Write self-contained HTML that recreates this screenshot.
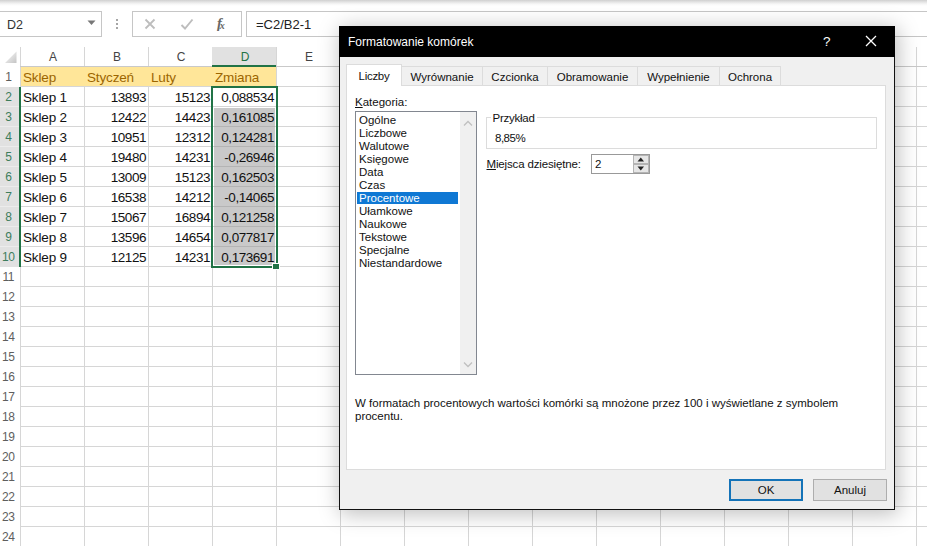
<!DOCTYPE html>
<html lang="pl"><head><meta charset="utf-8"><title>Formatowanie komórek</title>
<style>
html,body{margin:0;padding:0}
body{width:927px;height:546px;overflow:hidden;position:relative;background:#fff;font-family:"Liberation Sans",sans-serif;color:#222}
.abs{position:absolute}
#topbar{left:0;top:0;width:927px;height:6px;background:linear-gradient(#cfcfcf 0,#e4e4e4 2px,#f6f6f6 4px,#fff 6px)}
.box{border:1px solid #c6c6c6;background:#fff;box-sizing:border-box}
.t{position:absolute;white-space:nowrap;line-height:1}
.grid-v{position:absolute;width:1px;background:#d6d6d6}
.grid-h{position:absolute;height:1px;background:#d6d6d6}
.rh{position:absolute;left:0;width:16.5px;text-align:center;font-size:12px;letter-spacing:-0.5px;color:#5e5e5e;line-height:21px;height:20px}
.rh.sel{background:#e1e1e1;color:#3d7d5c}
.ch{position:absolute;top:47px;height:20px;width:64px;text-align:center;font-size:12px;color:#444;line-height:21px}
.cell{position:absolute;height:20px;line-height:21px;font-size:13.5px;color:#111;white-space:nowrap;box-sizing:border-box;letter-spacing:-0.15px}
.hd{color:#9c6a00;background:#ffe699}
.num{text-align:right;padding-right:2px;letter-spacing:-0.45px}
.dlgt{font-size:11.5px;color:#111}
</style></head><body>
<div id="topbar" class="abs"></div>

<div class="abs box" style="left:-1px;top:11px;width:103px;height:26px"></div>
<div class="t" style="left:7px;top:18.5px;font-size:12.5px;color:#333">D2</div>
<svg class="abs" style="left:87px;top:20px" width="9" height="6"><path d="M0.5 0.5H8.5L4.5 5Z" fill="#777"/></svg>
<div class="abs" style="left:116px;top:19px;width:2px;height:2px;background:#a6a6a6;box-shadow:0 4px 0 #a6a6a6,0 8px 0 #a6a6a6"></div>
<div class="abs box" style="left:132px;top:11px;width:110px;height:26px"></div>
<svg class="abs" style="left:144px;top:18px" width="12" height="12"><path d="M1.5 1.5L10.5 10.5M10.5 1.5L1.5 10.5" stroke="#bdbdbd" stroke-width="1.8" fill="none"/></svg>
<svg class="abs" style="left:180px;top:18px" width="14" height="12"><path d="M1.5 7L5 10.5L12.5 1.5" stroke="#bdbdbd" stroke-width="1.9" fill="none"/></svg>
<div class="t" style="left:217px;top:15.5px;font-size:14.5px;font-style:italic;font-weight:bold;font-family:'Liberation Serif',serif;color:#666">f<span style="font-size:10px;position:relative;top:1px;left:-2px">x</span></div>
<div class="abs box" style="left:246px;top:11px;width:700px;height:26px"></div>
<div class="t" style="left:256px;top:18px;font-size:13px;color:#222">=C2/B2-1</div>
<div class="abs" style="left:21px;top:67px;width:255px;height:20px;background:#ffe699"></div>
<div class="abs" style="left:214px;top:108px;width:61px;height:157px;background:#c9c9c9"></div>
<div class="grid-v" style="left:20px;top:47px;height:499px"></div>
<div class="grid-v" style="left:84px;top:47px;height:499px"></div>
<div class="grid-v" style="left:148px;top:47px;height:499px"></div>
<div class="grid-v" style="left:212px;top:47px;height:499px"></div>
<div class="grid-v" style="left:276px;top:47px;height:499px"></div>
<div class="grid-v" style="left:340px;top:47px;height:499px"></div>
<div class="grid-v" style="left:404px;top:47px;height:499px"></div>
<div class="grid-v" style="left:468px;top:47px;height:499px"></div>
<div class="grid-v" style="left:532px;top:47px;height:499px"></div>
<div class="grid-v" style="left:596px;top:47px;height:499px"></div>
<div class="grid-v" style="left:660px;top:47px;height:499px"></div>
<div class="grid-v" style="left:724px;top:47px;height:499px"></div>
<div class="grid-v" style="left:788px;top:47px;height:499px"></div>
<div class="grid-v" style="left:852px;top:47px;height:499px"></div>
<div class="grid-v" style="left:916px;top:47px;height:499px"></div>
<div class="grid-h" style="left:20px;top:66px;width:907px;background:#c9c9c9"></div>
<div class="grid-h" style="left:20px;top:86px;width:907px"></div>
<div class="grid-h" style="left:20px;top:106px;width:907px"></div>
<div class="grid-h" style="left:20px;top:126px;width:907px"></div>
<div class="grid-h" style="left:20px;top:146px;width:907px"></div>
<div class="grid-h" style="left:20px;top:166px;width:907px"></div>
<div class="grid-h" style="left:20px;top:186px;width:907px"></div>
<div class="grid-h" style="left:20px;top:206px;width:907px"></div>
<div class="grid-h" style="left:20px;top:226px;width:907px"></div>
<div class="grid-h" style="left:20px;top:246px;width:907px"></div>
<div class="grid-h" style="left:20px;top:266px;width:907px"></div>
<div class="grid-h" style="left:20px;top:286px;width:907px"></div>
<div class="grid-h" style="left:20px;top:306px;width:907px"></div>
<div class="grid-h" style="left:20px;top:326px;width:907px"></div>
<div class="grid-h" style="left:20px;top:346px;width:907px"></div>
<div class="grid-h" style="left:20px;top:366px;width:907px"></div>
<div class="grid-h" style="left:20px;top:386px;width:907px"></div>
<div class="grid-h" style="left:20px;top:406px;width:907px"></div>
<div class="grid-h" style="left:20px;top:426px;width:907px"></div>
<div class="grid-h" style="left:20px;top:446px;width:907px"></div>
<div class="grid-h" style="left:20px;top:466px;width:907px"></div>
<div class="grid-h" style="left:20px;top:486px;width:907px"></div>
<div class="grid-h" style="left:20px;top:506px;width:907px"></div>
<div class="grid-h" style="left:20px;top:526px;width:907px"></div>
<div class="grid-h" style="left:20px;top:546px;width:907px"></div>
<div class="abs" style="left:21px;top:67px;width:255px;height:19px;background:#ffe699"></div>
<div class="abs" style="left:214px;top:108px;width:61px;height:157px;background:#c9c9c9"></div>
<div class="grid-h" style="left:214px;top:126px;width:61px;background:#b4b4b4"></div>
<div class="grid-h" style="left:214px;top:146px;width:61px;background:#b4b4b4"></div>
<div class="grid-h" style="left:214px;top:166px;width:61px;background:#b4b4b4"></div>
<div class="grid-h" style="left:214px;top:186px;width:61px;background:#b4b4b4"></div>
<div class="grid-h" style="left:214px;top:206px;width:61px;background:#b4b4b4"></div>
<div class="grid-h" style="left:214px;top:226px;width:61px;background:#b4b4b4"></div>
<div class="grid-h" style="left:214px;top:246px;width:61px;background:#b4b4b4"></div>
<div class="abs" style="left:212px;top:47px;width:64px;height:18px;background:#e1e1e1;border-bottom:2px solid #217346;box-sizing:content-box"></div>
<div class="abs" style="left:0;top:87px;width:19px;height:180px;background:#e1e1e1;border-right:2px solid #217346"></div>
<div class="grid-h" style="left:0;top:106px;width:19px;background:#ececec"></div>
<div class="grid-h" style="left:0;top:126px;width:19px;background:#ececec"></div>
<div class="grid-h" style="left:0;top:146px;width:19px;background:#ececec"></div>
<div class="grid-h" style="left:0;top:166px;width:19px;background:#ececec"></div>
<div class="grid-h" style="left:0;top:186px;width:19px;background:#ececec"></div>
<div class="grid-h" style="left:0;top:206px;width:19px;background:#ececec"></div>
<div class="grid-h" style="left:0;top:226px;width:19px;background:#ececec"></div>
<div class="grid-h" style="left:0;top:246px;width:19px;background:#ececec"></div>
<svg class="abs" style="left:3px;top:50px" width="15" height="15"><defs><linearGradient id="tg" x1="0" y1="0" x2="1" y2="1"><stop offset="0.3" stop-color="#ececec"/><stop offset="1" stop-color="#c4c4c4"/></linearGradient></defs><path d="M13.5 1.5V13H2Z" fill="url(#tg)"/></svg>
<div class="ch" style="left:21px;color:#444">A</div>
<div class="ch" style="left:85px;color:#444">B</div>
<div class="ch" style="left:149px;color:#444">C</div>
<div class="ch" style="left:213px;color:#217346">D</div>
<div class="ch" style="left:277px;color:#444">E</div>
<div class="rh" style="top:67px;">1</div>
<div class="rh sel" style="top:87px;background:none;">2</div>
<div class="rh sel" style="top:107px;background:none;">3</div>
<div class="rh sel" style="top:127px;background:none;">4</div>
<div class="rh sel" style="top:147px;background:none;">5</div>
<div class="rh sel" style="top:167px;background:none;">6</div>
<div class="rh sel" style="top:187px;background:none;">7</div>
<div class="rh sel" style="top:207px;background:none;">8</div>
<div class="rh sel" style="top:227px;background:none;">9</div>
<div class="rh sel" style="top:247px;background:none;">10</div>
<div class="rh" style="top:267px;">11</div>
<div class="rh" style="top:287px;">12</div>
<div class="rh" style="top:307px;">13</div>
<div class="rh" style="top:327px;">14</div>
<div class="rh" style="top:347px;">15</div>
<div class="rh" style="top:367px;">16</div>
<div class="rh" style="top:387px;">17</div>
<div class="rh" style="top:407px;">18</div>
<div class="rh" style="top:427px;">19</div>
<div class="rh" style="top:447px;">20</div>
<div class="rh" style="top:467px;">21</div>
<div class="rh" style="top:487px;">22</div>
<div class="rh" style="top:507px;">23</div>
<div class="rh" style="top:527px;">24</div>
<div class="cell" style="left:23px;top:67px;color:#9c6500">Sklep</div>
<div class="cell" style="left:87px;top:67px;color:#9c6500">Styczeń</div>
<div class="cell" style="left:151px;top:67px;color:#9c6500">Luty</div>
<div class="cell" style="left:215px;top:67px;color:#9c6500">Zmiana</div>
<div class="cell" style="left:23px;top:87px">Sklep 1</div>
<div class="cell num" style="left:84px;width:64px;top:87px">13893</div>
<div class="cell num" style="left:148px;width:64px;top:87px">15123</div>
<div class="cell num" style="left:212px;width:64px;top:87px">0,088534</div>
<div class="cell" style="left:23px;top:107px">Sklep 2</div>
<div class="cell num" style="left:84px;width:64px;top:107px">12422</div>
<div class="cell num" style="left:148px;width:64px;top:107px">14423</div>
<div class="cell num" style="left:212px;width:64px;top:107px">0,161085</div>
<div class="cell" style="left:23px;top:127px">Sklep 3</div>
<div class="cell num" style="left:84px;width:64px;top:127px">10951</div>
<div class="cell num" style="left:148px;width:64px;top:127px">12312</div>
<div class="cell num" style="left:212px;width:64px;top:127px">0,124281</div>
<div class="cell" style="left:23px;top:147px">Sklep 4</div>
<div class="cell num" style="left:84px;width:64px;top:147px">19480</div>
<div class="cell num" style="left:148px;width:64px;top:147px">14231</div>
<div class="cell num" style="left:212px;width:64px;top:147px">-0,26946</div>
<div class="cell" style="left:23px;top:167px">Sklep 5</div>
<div class="cell num" style="left:84px;width:64px;top:167px">13009</div>
<div class="cell num" style="left:148px;width:64px;top:167px">15123</div>
<div class="cell num" style="left:212px;width:64px;top:167px">0,162503</div>
<div class="cell" style="left:23px;top:187px">Sklep 6</div>
<div class="cell num" style="left:84px;width:64px;top:187px">16538</div>
<div class="cell num" style="left:148px;width:64px;top:187px">14212</div>
<div class="cell num" style="left:212px;width:64px;top:187px">-0,14065</div>
<div class="cell" style="left:23px;top:207px">Sklep 7</div>
<div class="cell num" style="left:84px;width:64px;top:207px">15067</div>
<div class="cell num" style="left:148px;width:64px;top:207px">16894</div>
<div class="cell num" style="left:212px;width:64px;top:207px">0,121258</div>
<div class="cell" style="left:23px;top:227px">Sklep 8</div>
<div class="cell num" style="left:84px;width:64px;top:227px">13596</div>
<div class="cell num" style="left:148px;width:64px;top:227px">14654</div>
<div class="cell num" style="left:212px;width:64px;top:227px">0,077817</div>
<div class="cell" style="left:23px;top:247px">Sklep 9</div>
<div class="cell num" style="left:84px;width:64px;top:247px">12125</div>
<div class="cell num" style="left:148px;width:64px;top:247px">14231</div>
<div class="cell num" style="left:212px;width:64px;top:247px">0,173691</div>
<div class="abs" style="left:211px;top:86px;width:63px;height:178px;border:2px solid #217346"></div>
<div class="abs" style="left:272px;top:263px;width:6px;height:5px;background:#217346;border:1px solid #fff"></div>
<div class="abs" style="left:339px;top:26px;width:556px;height:484px;background:#f0f0f0;border:1px solid #111;box-sizing:border-box;box-shadow:2px 3px 20px 1px rgba(0,0,0,.26)"></div>
<div class="abs" style="left:339px;top:26px;width:556px;height:31px;background:#000"></div>
<div class="t" style="left:348px;top:36px;font-size:12px;color:#fff">Formatowanie komórek</div>
<div class="t" style="left:823px;top:35px;font-size:13.5px;color:#fff">?</div>
<svg class="abs" style="left:865px;top:35px" width="12" height="12"><path d="M1 1L11 11M11 1L1 11" stroke="#fff" stroke-width="1.3" fill="none"/></svg>
<div class="abs" style="left:346px;top:85px;width:540px;height:385px;background:#fff;border:1px solid #dcdcdc;box-sizing:border-box"></div>
<div class="abs dlgt" style="left:402px;top:66px;width:81px;height:19px;border:1px solid #dcdcdc;border-left:none;border-bottom:none;box-sizing:border-box;text-align:center;line-height:21px">Wyrównanie</div>
<div class="abs dlgt" style="left:483px;top:66px;width:65px;height:19px;border:1px solid #dcdcdc;border-left:none;border-bottom:none;box-sizing:border-box;text-align:center;line-height:21px">Czcionka</div>
<div class="abs dlgt" style="left:548px;top:66px;width:90px;height:19px;border:1px solid #dcdcdc;border-left:none;border-bottom:none;box-sizing:border-box;text-align:center;line-height:21px">Obramowanie</div>
<div class="abs dlgt" style="left:638px;top:66px;width:82px;height:19px;border:1px solid #dcdcdc;border-left:none;border-bottom:none;box-sizing:border-box;text-align:center;line-height:21px">Wypełnienie</div>
<div class="abs dlgt" style="left:720px;top:66px;width:61px;height:19px;border:1px solid #dcdcdc;border-left:none;border-bottom:none;box-sizing:border-box;text-align:center;line-height:21px">Ochrona</div>
<div class="abs dlgt" style="left:346px;top:64px;width:56px;height:22px;background:#fff;border:1px solid #dcdcdc;border-bottom:none;box-sizing:border-box;text-align:center;line-height:23px;letter-spacing:-0.3px">Liczby</div>
<div class="t dlgt" style="left:355px;top:97px"><span style="text-decoration:underline">K</span>ategoria:</div>
<div class="abs" style="left:355px;top:111px;width:122px;height:264px;background:#fff;border:1px solid #828790;box-sizing:border-box"></div>
<div class="abs" style="left:460px;top:112px;width:16px;height:262px;background:#f0f0f0"></div>
<svg class="abs" style="left:463px;top:119.5px" width="10" height="7"><path d="M1 5.5L5 1.5L9 5.5" stroke="#c0c0c0" stroke-width="1.3" fill="none"/></svg>
<svg class="abs" style="left:463px;top:361px" width="10" height="7"><path d="M1 1.5L5 5.5L9 1.5" stroke="#c0c0c0" stroke-width="1.3" fill="none"/></svg>
<div class="t dlgt" style="left:359px;top:115px">Ogólne</div>
<div class="t dlgt" style="left:359px;top:128px">Liczbowe</div>
<div class="t dlgt" style="left:359px;top:141px">Walutowe</div>
<div class="t dlgt" style="left:359px;top:154px">Księgowe</div>
<div class="t dlgt" style="left:359px;top:167px">Data</div>
<div class="t dlgt" style="left:359px;top:180px">Czas</div>
<div class="abs" style="left:357px;top:191.5px;width:101px;height:12.5px;background:#0f78d4"></div>
<div class="t dlgt" style="left:359px;top:193px;color:#fff">Procentowe</div>
<div class="t dlgt" style="left:359px;top:206px">Ułamkowe</div>
<div class="t dlgt" style="left:359px;top:219px">Naukowe</div>
<div class="t dlgt" style="left:359px;top:232px">Tekstowe</div>
<div class="t dlgt" style="left:359px;top:245px">Specjalne</div>
<div class="t dlgt" style="left:359px;top:258px">Niestandardowe</div>
<div class="abs" style="left:486px;top:117px;width:391px;height:32px;border:1px solid #dcdcdc;box-sizing:border-box"></div>
<div class="t dlgt" style="left:490.5px;top:113px;background:#fff;padding:0 2px;letter-spacing:-0.25px">Przykład</div>
<div class="t dlgt" style="left:495px;top:133px;letter-spacing:-0.5px">8,85%</div>
<div class="t dlgt" style="left:486.5px;top:159px;letter-spacing:-0.15px"><span style="text-decoration:underline">M</span>iejsca dziesiętne:</div>
<div class="abs" style="left:591px;top:154px;width:59px;height:20px;background:#fff;border:1px solid #999;box-sizing:border-box"></div>
<div class="t dlgt" style="left:595px;top:159px">2</div>
<div class="abs" style="left:633px;top:155px;width:16px;height:9px;background:#e6e6e6;border:1px solid #b4b4b4;box-sizing:border-box"></div>
<div class="abs" style="left:633px;top:164px;width:16px;height:9px;background:#e6e6e6;border:1px solid #b4b4b4;box-sizing:border-box"></div>
<svg class="abs" style="left:637px;top:157px" width="8" height="5"><path d="M0.5 4.4L3.75 0.6L7 4.4Z" fill="#222"/></svg>
<svg class="abs" style="left:637px;top:166px" width="8" height="5"><path d="M0.5 0.6L3.75 4.4L7 0.6Z" fill="#222"/></svg>
<div class="abs dlgt" style="left:355px;top:397px;width:520px;line-height:13px;white-space:normal">W formatach procentowych wartości komórki są mnożone przez 100 i wyświetlane z symbolem procentu.</div>
<div class="abs dlgt" style="left:729px;top:479px;width:74px;height:22px;background:#e1e1e1;border:2px solid #1473b8;box-sizing:border-box;text-align:center;line-height:19px">OK</div>
<div class="abs dlgt" style="left:813px;top:479px;width:74px;height:22px;background:#e1e1e1;border:1px solid #adadad;box-sizing:border-box;text-align:center;line-height:21px">Anuluj</div>
</body></html>
